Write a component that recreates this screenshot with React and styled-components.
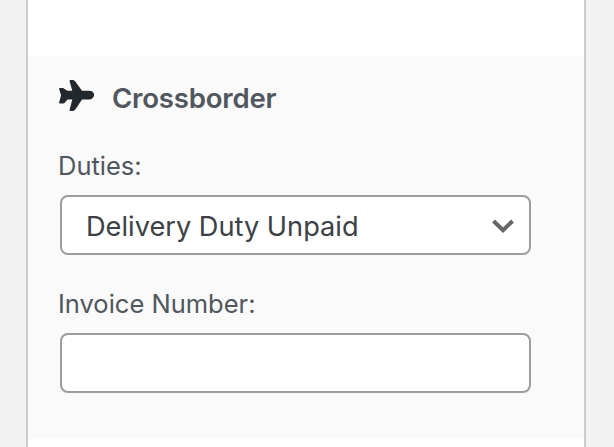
import React from 'react';
import styled, { createGlobalStyle } from 'styled-components';

const GlobalStyle = createGlobalStyle`
  * { box-sizing: border-box; }
  body { margin: 0; background: #f2f2f2; overflow: hidden; }
`;
const Panel = styled.main`
  width: 560px;
  height: 447px;
  margin-left: 26px;
  padding-top: 56px;
  background: #fff;
  border: solid #cccccd;
  border-width: 0 2px;
  font-family: Inter, "Liberation Sans", sans-serif;
`;
const Section = styled.section`
  height: 383px;
  padding: 22px 54px 0 32px;
  background: #fafafa;
`;
const Heading = styled.h2`
  display: flex;
  align-items: center;
  gap: 18px;
  height: 40px;
  margin: 0 0 0 -2px;
  color: #50575e;
  font-size: 27.6px;
  font-weight: 600;
  line-height: 40px;
`;
const Plane = styled.svg`
  width: 36px;
  height: 36px;
  flex: none;
  fill: #23282d;
`;
const Title = styled.span`
  letter-spacing: -0.22px;
  white-space: nowrap;
`;
const Label = styled.label`
  display: block;
  height: 34px;
  margin: ${p => p.$top}px 0 12px -2px;
  color: #50575e;
  font-size: 25.5px;
  line-height: 34px;
`;
const Select = styled.button`
  display: flex;
  align-items: center;
  justify-content: space-between;
  width: 471px;
  height: 60px;
  padding: 2px 14px 0 24px;
  border: 2px solid #9b9da0;
  border-radius: 8px;
  background: #fff;
  color: #3c4146;
  font-family: inherit;
  font-size: 27.2px;
`;
const Chevron = styled.svg`
  width: 24px;
  height: 16px;
  fill: none;
  stroke: #656667;
  stroke-width: 4;
`;
const Input = styled.input`
  display: block;
  width: 471px;
  height: 60px;
  border: 2px solid #9b9da0;
  border-radius: 8px;
  background: #fff;
`;

export default function App() {
  return <>
    <GlobalStyle />
    <Panel>
      <Section>
        <Heading>
          <Plane viewBox="0 0 36 36"><path d="M12.5 0h2.2q1.8 0 2.8 1.8L24 10.7h7.5q3 0 4.1 2.4 1.2 2 0 3.7-1.5 2.8-4.1 2.8H24L17.5 29.2Q16.5 31 14.7 31h-2.2q-1.2 0-.9-1.3l2.7-10.1H9.5L7 22.4q-.8 1-2 1H2q-1.2 0-.8-1.3l1.9-6.8-1.9-6Q.8 8 2 8h2.5q1.2 0 2 .9l3 1.8h4.8L11.6 1.3Q11.3 0 12.5 0Z" /></Plane>
          <Title>Crossborder</Title>
        </Heading>
        <Label $top={31}>Duties:</Label>
        <Select type="button"><span>Delivery Duty Unpaid</span><Chevron viewBox="0 0 24 16"><path d="m2.5 3 9.5 9.2L21.5 3" /></Chevron></Select>
        <Label htmlFor="invoice" $top={32}>Invoice Number:</Label>
        <Input id="invoice" />
      </Section>
    </Panel>
  </>;
}
